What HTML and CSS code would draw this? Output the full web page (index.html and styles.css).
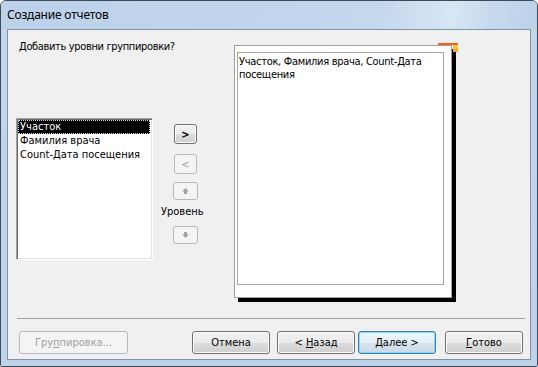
FILE: index.html
```html
<!DOCTYPE html>
<html lang="ru">
<head>
<meta charset="utf-8">
<title>Создание отчетов</title>
<link rel="stylesheet" href="styles.css">
</head>
<body>
<div class="window">
  <div class="titlebar">Создание отчетов</div>
  <div class="frame">
    <div class="client">
      <div class="main">
        <div class="left">
          <div class="prompt">Добавить уровни группировки?</div>
          <div class="listbox">
            <div class="item selected">Участок</div>
            <div class="item">Фамилия врача</div>
            <div class="item">Count-Дата посещения</div>
          </div>
        </div>
        <div class="mid">
          <div class="btn move">&gt;</div>
          <div class="btn move off back">&lt;</div>
          <div class="btn arrow off up">
            <svg width="7" height="6" viewBox="0 0 7 6"><path d="M3.5 0 L7 3.5 H5 V6 H2 V3.5 H0 Z" fill="#a3a3a3"/></svg>
          </div>
          <div class="level">Уровень</div>
          <div class="btn arrow off down">
            <svg width="7" height="6" viewBox="0 0 7 6"><path d="M3.5 6 L7 2.5 H5 V0 H2 V2.5 H0 Z" fill="#a3a3a3"/></svg>
          </div>
        </div>
        <div class="preview">
          <div class="corner"></div>
          <div class="sheet">Участок, Фамилия врача, Count-Дата<br>посещения</div>
        </div>
      </div>
      <div class="sep"></div>
      <div class="actions">
        <div class="btn wide off group"><span>Гру<u>п</u>пировка...</span></div>
        <div class="btn wide cancel"><span>Отмена</span></div>
        <div class="btn wide prev"><span>&lt; <u>Н</u>азад</span></div>
        <div class="btn wide next default"><span><u>Д</u>алее &gt;</span></div>
        <div class="btn wide done"><span><u>Г</u>отово</span></div>
      </div>
    </div>
  </div>
</div>
</body>
</html>
```
FILE: styles.css
```css
html, body {
  margin: 0;
  padding: 0;
  background: #fff;
}

.window {
  box-sizing: border-box;
  width: 538px;
  height: 367px;
  border: 1px solid #3e4a58;
  border-radius: 6px 6px 2px 2px;
  background: #c2d6ec;
  overflow: hidden;
  display: flex;
  flex-direction: column;
}

.titlebar {
  height: 28px;
  line-height: 28px;
  padding-left: 6px;
  font-family: "Noto Sans", "Liberation Sans", sans-serif;
  font-size: 12px;
  letter-spacing: -0.2px;
  color: #000;
  background: linear-gradient(100deg, #bcd2ea 0%, #c3d7ed 70%, #d8e6f4 84%, #c6d9ee 91%, #bcd2ea 100%);
}

.frame {
  flex: 1;
  padding: 0 6px 6px 6px;
  display: flex;
  background: linear-gradient(#c3d7ec, #bcd3ea);
}

.client {
  flex: 1;
  border: 1px solid #8193a8;
  background: #f0f0f0;
  display: flex;
  flex-direction: column;
  font-family: "DejaVu Sans Condensed", "Liberation Sans", sans-serif;
  font-size: 11px;
  color: #000;
}

.main {
  height: 288px;
  display: flex;
}

.left {
  width: 137px;
  margin-left: 8px;
  padding-top: 10px;
}

.prompt {
  margin-left: 3px;
  line-height: 13px;
  white-space: nowrap;
  letter-spacing: -0.35px;
}

.listbox {
  box-sizing: border-box;
  margin-top: 65px;
  height: 142px;
  background: #fff;
  border-top: 1px solid #a0a0a0;
  border-left: 1px solid #a0a0a0;
  border-right: 1px solid #fff;
  border-bottom: 1px solid #fff;
  box-shadow: inset 1px 1px 0 #696969, inset -1px -1px 0 #e3e3e3;
  padding: 1px 2px 1px 1px;
}

.item {
  height: 14px;
  line-height: 14px;
  padding-left: 2px;
  white-space: nowrap;
}

.item.selected {
  background: #000;
  color: #fff;
  outline: 1px dotted #cfcfcf;
  outline-offset: -1px;
}

.mid {
  width: 50px;
  margin-left: 8px;
  padding-top: 94px;
  display: flex;
  flex-direction: column;
  align-items: flex-start;
}

.btn {
  box-sizing: border-box;
  display: flex;
  align-items: center;
  justify-content: center;
  border: 1px solid #707070;
  border-radius: 3px;
  background: linear-gradient(#f2f2f2 0%, #ebebeb 50%, #dddddd 50%, #cfcfcf 100%);
  box-shadow: inset 0 0 0 1px #fbfbfb;
  color: #000;
  white-space: pre;
}

.btn.off {
  border-color: #b5b9bc;
  background: #f4f4f4;
  box-shadow: none;
  color: #a0a0a0;
}

.btn.move {
  width: 23px;
  height: 20px;
  margin-left: 13px;
  font-weight: bold;
}

.btn.back {
  margin-top: 10px;
  font-weight: normal;
}

.btn.arrow {
  width: 25px;
  height: 18px;
  margin-left: 12px;
}

.btn.up {
  margin-top: 8px;
}

.btn svg {
  display: block;
}

.level {
  margin-top: 5px;
  line-height: 14px;
  white-space: nowrap;
}

.btn.down {
  margin-top: 7px;
}

.preview {
  position: relative;
  box-sizing: border-box;
  width: 218px;
  height: 253px;
  margin-left: 23px;
  margin-top: 15px;
  border: 1px solid #a0a0a0;
  background: #fff;
  box-shadow: 4px 4px 0 #000;
  padding: 6px 7px 11px 2px;
}

.corner {
  position: absolute;
  left: 203px;
  top: -3px;
  width: 20px;
  height: 9px;
  border-top: 2px solid #ff5a1a;
  box-sizing: border-box;
}

.corner::after {
  content: "";
  position: absolute;
  right: 0;
  top: 0;
  width: 5px;
  height: 7px;
  background: linear-gradient(#ffd84a, #ff9c1a);
}

.sheet {
  box-sizing: border-box;
  width: 207px;
  height: 233px;
  border: 1px solid #a8a8a8;
  padding: 2px 0 0 1px;
  line-height: 13px;
  letter-spacing: -0.3px;
}

.sep {
  height: 1px;
  margin: 0 5px 0 9px;
  background: #a0a0a0;
}

.actions {
  margin-top: 12px;
  display: flex;
  padding-left: 11px;
}

.btn.wide {
  width: 78px;
  height: 23px;
}

.btn.group {
  width: 109px;
}

.btn.cancel {
  margin-left: 64px;
}

.btn.prev {
  margin-left: 7px;
}

.btn.next {
  margin-left: 3px;
}

.btn.done {
  margin-left: 9px;
}

.btn.default {
  border-color: #3c7fb1;
  box-shadow: inset 0 0 0 1px #7fdcf8;
  background: linear-gradient(#eef6fb 0%, #e4eff7 50%, #d6e4ef 50%, #cadae6 100%);
}

.btn u {
  text-decoration: underline;
  text-underline-offset: 1px;
}
```
